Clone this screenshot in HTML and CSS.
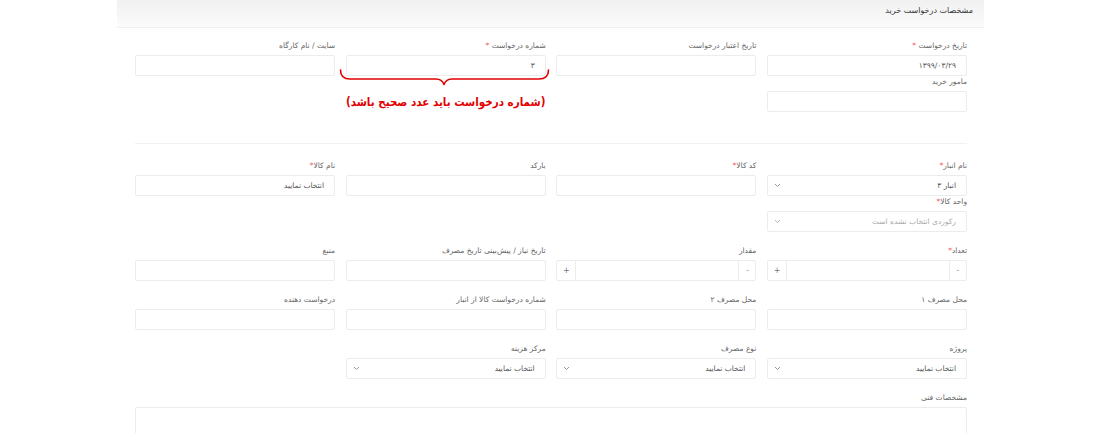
FILE: index.html
```html
<!DOCTYPE html>
<html lang="fa" dir="rtl">
<head>
<meta charset="utf-8">
<title>مشخصات درخواست خرید</title>
<link rel="stylesheet" href="styles.css">
</head>
<body>
<div class="card">
  <div class="card-head">مشخصات درخواست خرید</div>
  <div class="card-body">
    <div class="grid">
      <div class="col">
        <div class="field">
          <label class="lbl">تاریخ درخواست <span class="req">*</span></label>
          <div class="input"><span class="val">۱۳۹۹/۰۳/۲۹</span></div>
        </div>
        <div class="field">
          <label class="lbl">مامور خرید</label>
          <div class="input"></div>
        </div>
      </div>
      <div class="col">
        <div class="field">
          <label class="lbl">تاریخ اعتبار درخواست</label>
          <div class="input"></div>
        </div>
      </div>
      <div class="col">
        <div class="field annotated">
          <label class="lbl">شماره درخواست <span class="req">*</span></label>
          <div class="input"><span class="val">۳</span></div>
          <svg class="brace" width="212" height="18" viewBox="0 0 212 18"><path d="M1.5 1 Q1.5 10 11 10 L97 10 Q103 10 105 15.5 Q107 10 113 10 L200 10 Q209.5 10 209.5 1" fill="none" stroke="#e30000" stroke-width="1.6" stroke-linecap="round" stroke-linejoin="round"/></svg>
          <div class="error-note">(شماره درخواست باید عدد صحیح باشد)</div>
        </div>
      </div>
      <div class="col">
        <div class="field">
          <label class="lbl">سایت / نام کارگاه</label>
          <div class="input"></div>
        </div>
      </div>
    </div>

    <div class="divider"></div>

    <div class="grid">
      <div class="col">
        <div class="field">
          <label class="lbl">نام انبار<span class="req">*</span></label>
          <div class="input select"><span class="val">انبار ۳</span><svg class="chev" width="7" height="5" viewBox="0 0 7 5"><path d="M1 1 L3.5 3.5 L6 1" fill="none" stroke="#999" stroke-width="1"/></svg></div>
        </div>
        <div class="field">
          <label class="lbl">واحد کالا<span class="req">*</span></label>
          <div class="input select"><span class="val muted">رکوردی انتخاب نشده است</span><svg class="chev" width="7" height="5" viewBox="0 0 7 5"><path d="M1 1 L3.5 3.5 L6 1" fill="none" stroke="#bbb" stroke-width="1"/></svg></div>
        </div>
      </div>
      <div class="col">
        <div class="field">
          <label class="lbl">کد کالا<span class="req">*</span></label>
          <div class="input"></div>
        </div>
      </div>
      <div class="col">
        <div class="field">
          <label class="lbl">بارکد</label>
          <div class="input"></div>
        </div>
      </div>
      <div class="col">
        <div class="field">
          <label class="lbl">نام کالا<span class="req">*</span></label>
          <div class="input"><span class="val">انتخاب نمایید</span></div>
        </div>
      </div>
    </div>

    <div class="grid gap-top">
      <div class="field">
        <label class="lbl">تعداد<span class="req">*</span></label>
        <div class="input spinner"><span class="sp-btn minus">-</span><span class="sp-mid"></span><span class="sp-btn plus">+</span></div>
      </div>
      <div class="field">
        <label class="lbl">مقدار</label>
        <div class="input spinner"><span class="sp-btn minus">-</span><span class="sp-mid"></span><span class="sp-btn plus">+</span></div>
      </div>
      <div class="field">
        <label class="lbl">تاریخ نیاز / پیش‌بینی تاریخ مصرف</label>
        <div class="input"></div>
      </div>
      <div class="field">
        <label class="lbl">منبع</label>
        <div class="input"></div>
      </div>
    </div>

    <div class="grid gap-top">
      <div class="field">
        <label class="lbl">محل مصرف ۱</label>
        <div class="input"></div>
      </div>
      <div class="field">
        <label class="lbl">محل مصرف ۲</label>
        <div class="input"></div>
      </div>
      <div class="field">
        <label class="lbl">شماره درخواست کالا از انبار</label>
        <div class="input"></div>
      </div>
      <div class="field">
        <label class="lbl">درخواست دهنده</label>
        <div class="input"></div>
      </div>
    </div>

    <div class="grid gap-top">
      <div class="field">
        <label class="lbl">پروژه</label>
        <div class="input select"><span class="val">انتخاب نمایید</span><svg class="chev" width="7" height="5" viewBox="0 0 7 5"><path d="M1 1 L3.5 3.5 L6 1" fill="none" stroke="#999" stroke-width="1"/></svg></div>
      </div>
      <div class="field">
        <label class="lbl">نوع مصرف</label>
        <div class="input select"><span class="val">انتخاب نمایید</span><svg class="chev" width="7" height="5" viewBox="0 0 7 5"><path d="M1 1 L3.5 3.5 L6 1" fill="none" stroke="#999" stroke-width="1"/></svg></div>
      </div>
      <div class="field">
        <label class="lbl">مرکز هزینه</label>
        <div class="input select"><span class="val">انتخاب نمایید</span><svg class="chev" width="7" height="5" viewBox="0 0 7 5"><path d="M1 1 L3.5 3.5 L6 1" fill="none" stroke="#999" stroke-width="1"/></svg></div>
      </div>
    </div>

    <div class="field gap-top">
      <label class="lbl">مشخصات فنی</label>
      <div class="textarea"></div>
    </div>
  </div>
</div>
</body>
</html>
```

FILE: styles.css
```css
* { box-sizing: border-box; }
html, body { margin: 0; padding: 0; background: #fff; }
body {
  font-family: "DejaVu Sans", "Noto Sans", sans-serif;
  color: #555;
  height: 433px;
  overflow: hidden;
}
.card {
  margin: 0 116px 0 117px;
  width: 867px;
  background: #fff;
}
.card-head {
  height: 28px;
  padding: 5px 11px 0 10px;
  font-size: 8px;
  line-height: 12px;
  color: #333;
  background: linear-gradient(to bottom, #f1f1f1, #fbfbfb);
  border-bottom: 1px solid #efefef;
}
.card-body {
  padding: 12px 17px 0 18px;
}
.grid {
  display: grid;
  grid-template-columns: repeat(4, 200px);
  column-gap: 10.67px;
  align-items: start;
}
.gap-top { margin-top: 13px; }
.col { display: flex; flex-direction: column; }
.field { display: flex; flex-direction: column; }
.lbl {
  display: block;
  font-size: 7.5px;
  line-height: 12px;
  height: 12px;
  margin-bottom: 3px;
  color: #666;
  white-space: nowrap;
}
.req { color: #f05a5a; }
.input {
  height: 21px;
  border: 1px solid #ececec;
  border-radius: 2px;
  background: #fff;
  display: flex;
  align-items: center;
  padding: 0 10px;
  font-size: 7.5px;
  color: #555;
}
.val { white-space: nowrap; }
.muted { color: #aaa; }
.select { justify-content: space-between; padding: 0 10px 0 6px; }
.chev { flex: none; }
.spinner { padding: 0; }
.sp-btn {
  flex: none;
  height: 100%;
  display: flex;
  align-items: center;
  justify-content: center;
  color: #999;
  font-size: 8px;
}
.minus { width: 17px; border-left: 1px solid #ececec; }
.plus { width: 19px; border-right: 1px solid #ececec; color: #777; }
.sp-mid { flex: 1; }
.annotated { position: relative; }
.brace {
  position: absolute;
  top: 29px;
  right: -5px;
}
.error-note {
  margin-top: 18px;
  text-align: center;
  font-family: "DejaVu Sans Condensed", "DejaVu Sans", sans-serif;
  font-size: 11.5px;
  font-weight: bold;
  color: #e30000;
  white-space: nowrap;
  line-height: 16px;
}
.divider {
  height: 1px;
  background: #f1f1f1;
  margin: 31px 0 16px;
}
.textarea {
  height: 40px;
  border: 1px solid #ececec;
  border-radius: 2px;
}
```
